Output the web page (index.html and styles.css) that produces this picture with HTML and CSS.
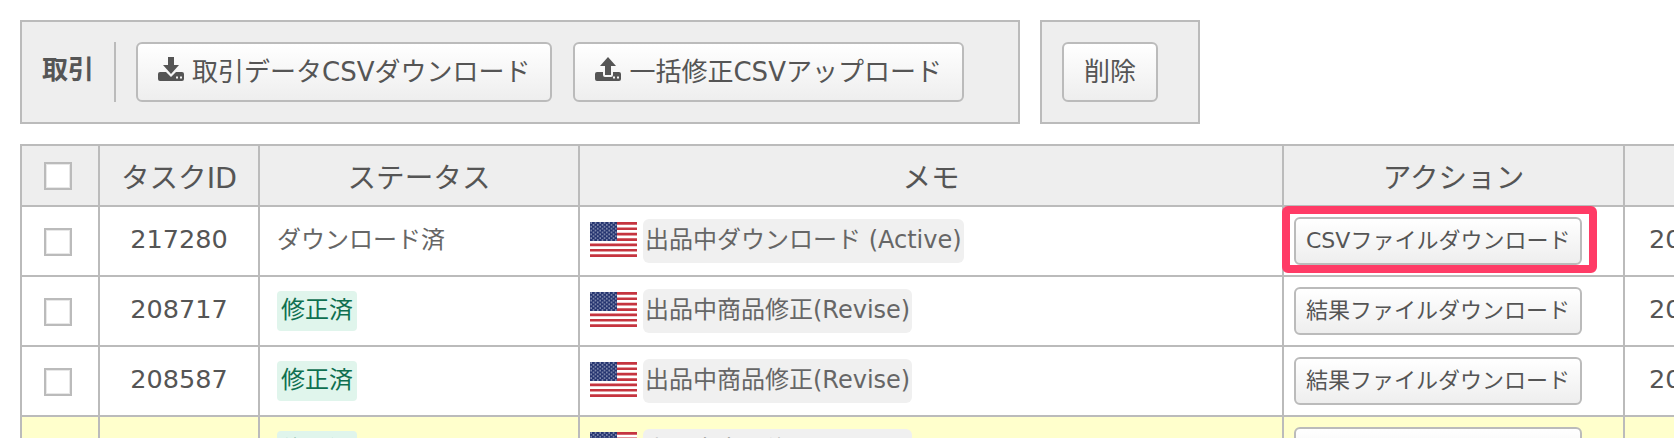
FILE: index.html
```html
<!DOCTYPE html>
<html lang="ja">
<head>
  <meta charset="UTF-8">
  <title>タスク一覧</title>
  <link rel="stylesheet" href="styles.css">
</head>
<body>

  <svg class="defs" width="0" height="0">
    <defs>
      <pattern id="stars" width="4.5" height="3.8" patternUnits="userSpaceOnUse">
        <circle cx="1.1" cy="0.9" r="0.7" fill="#dfe3f0"/>
        <circle cx="3.4" cy="2.8" r="0.7" fill="#dfe3f0"/>
      </pattern>
      <symbol id="flag-us" viewBox="0 0 47 35">
        <rect width="47" height="35" fill="#fff"/>
        <path d="M0 0h47v2.7H0zM0 5.4h47v2.7H0zM0 10.800h47v2.7H0zM0 16.200h47v2.7H0zM0 21.500h47v2.7H0zM0 26.900h47v2.7H0zM0 32.300h47V35H0z" fill="#c5343f"/>
        <rect width="27" height="19" fill="#24346f"/>
        <rect width="27" height="19" fill="url(#stars)"/>
      </symbol>
    </defs>
  </svg>

  <div class="toolbar">
    <div class="panel">
      <span class="panel-label">取引</span>
      <button class="btn">
        <svg class="icon" viewBox="0 0 26 24">
          <path fill-rule="evenodd" d="M10 0h6v8h5l-8 9-8-9h5zM2 15h6l5 5 5-5h6q2 0 2 2v5q0 2-2 2H2q-2 0-2-2v-5q0-2 2-2zM18 19.500v2h2v-2zM22 19.500v2h2v-2z"/>
        </svg>
        取引データCSVダウンロード
      </button>
      <button class="btn">
        <svg class="icon" viewBox="0 0 26 24">
          <path fill-rule="evenodd" d="M13 0l8 9h-5v9h-6V9H5zM2 15h6v3q0 2 2 2h6q2 0 2-2v-3h6q2 0 2 2v5q0 2-2 2H2q-2 0-2-2v-5q0-2 2-2zM18 19.500v2h2v-2zM22 19.500v2h2v-2z"/>
        </svg>
        一括修正CSVアップロード
      </button>
    </div>
    <div class="panel panel-small">
      <button class="btn">削除</button>
    </div>
  </div>

  <table class="task-table">
    <colgroup>
      <col class="col-check">
      <col class="col-id">
      <col class="col-status">
      <col class="col-memo">
      <col class="col-action">
      <col class="col-date">
    </colgroup>
    <thead>
      <tr>
        <th><input type="checkbox" class="check"></th>
        <th>タスクID</th>
        <th>ステータス</th>
        <th>メモ</th>
        <th>アクション</th>
        <th>作成日時</th>
      </tr>
    </thead>
    <tbody>
      <tr>
        <td><input type="checkbox" class="check"></td>
        <td class="num">217280</td>
        <td class="status status-plain">ダウンロード済</td>
        <td>
          <div class="memo">
            <svg class="flag"><use href="#flag-us"/></svg>
            <span class="chip">出品中ダウンロード (Active)</span>
          </div>
        </td>
        <td class="action">
          <button class="btn btn-small">CSVファイルダウンロード</button>
          <span class="highlight"></span>
        </td>
        <td class="date">2020/06/18</td>
      </tr>
      <tr>
        <td><input type="checkbox" class="check"></td>
        <td class="num">208717</td>
        <td class="status"><span class="badge">修正済</span></td>
        <td>
          <div class="memo">
            <svg class="flag"><use href="#flag-us"/></svg>
            <span class="chip">出品中商品修正(Revise)</span>
          </div>
        </td>
        <td class="action"><button class="btn btn-small">結果ファイルダウンロード</button></td>
        <td class="date">2020/06/02</td>
      </tr>
      <tr>
        <td><input type="checkbox" class="check"></td>
        <td class="num">208587</td>
        <td class="status"><span class="badge">修正済</span></td>
        <td>
          <div class="memo">
            <svg class="flag"><use href="#flag-us"/></svg>
            <span class="chip">出品中商品修正(Revise)</span>
          </div>
        </td>
        <td class="action"><button class="btn btn-small">結果ファイルダウンロード</button></td>
        <td class="date">2020/06/02</td>
      </tr>
      <tr class="row-new">
        <td><input type="checkbox" class="check"></td>
        <td class="num">208412</td>
        <td class="status"><span class="badge">修正済</span></td>
        <td>
          <div class="memo">
            <svg class="flag"><use href="#flag-us"/></svg>
            <span class="chip">出品中商品修正(Revise)</span>
          </div>
        </td>
        <td class="action"><button class="btn btn-small">結果ファイルダウンロード</button></td>
        <td class="date">2020/06/01</td>
      </tr>
    </tbody>
  </table>

</body>
</html>
```

FILE: styles.css
```css
* {
  box-sizing: border-box;
}

html, body {
  height: 438px;
  overflow: hidden;
}

body {
  margin: 0;
  padding: 20px;
  background: #fff;
  color: #555;
  font-family: "DejaVu Sans", "Noto Sans CJK JP", sans-serif;
  font-size: 24px;
}

.defs {
  position: absolute;
}

.toolbar {
  display: flex;
  gap: 20px;
  margin-bottom: 20px;
}

.panel {
  display: flex;
  align-items: center;
  gap: 21px;
  width: 1000px;
  height: 104px;
  padding: 0 20px;
  background: #eee;
  border: 2px solid #bbb;
}

.panel-small {
  width: 160px;
}

.panel-label {
  height: 60px;
  margin-right: -1px;
  padding-right: 20px;
  line-height: 57px;
  border-right: 2px solid #bbb;
  font-weight: bold;
  font-size: 26px;
}

.btn {
  display: inline-flex;
  align-items: center;
  gap: 8px;
  height: 60px;
  padding: 0 20px 6px;
  background: linear-gradient(#fff, #eee);
  border: 2px solid #bbb;
  border-radius: 6px;
  color: #555;
  font-family: inherit;
  font-size: 26px;
  white-space: nowrap;
}

.btn-small {
  height: 48px;
  padding: 0 10px 6px;
  font-size: 22px;
}

.icon {
  width: 26px;
  height: 24px;
  fill: #555;
}

.task-table {
  width: 2003px;
  table-layout: fixed;
  border-collapse: collapse;
}

.col-check { width: 78px; }
.col-id { width: 160px; }
.col-status { width: 320px; }
.col-memo { width: 704px; }
.col-action { width: 341px; }
.col-date { width: 400px; }

th, td {
  padding: 0;
  border: 2px solid #bbb;
  text-align: center;
}

th {
  height: 61px;
  background: #eee;
  font-weight: normal;
  font-size: 28.6px;
}

td {
  height: 70px;
  font-size: 25.5px;
}

.row-new td {
  background: #ffc;
}

.check {
  display: block;
  appearance: none;
  width: 28px;
  height: 28px;
  margin: 0 auto;
  position: relative;
  left: -2px;
  background: #fff;
  border: 2px solid #bbb;
  box-shadow: inset 0 0 0 1px #e8e8e8;
}

td .check {
  top: 1px;
}

td.num {
  padding-bottom: 4px;
}

td.status {
  padding-left: 17px;
  text-align: left;
  font-size: 24px;
}

td.status-plain {
  padding-bottom: 8px;
  color: #666;
}

.badge {
  display: inline-block;
  padding: 0 4px 2px;
  line-height: 38px;
  background: #e0f5ec;
  border-radius: 4px;
  color: #0f7050;
}

.memo {
  display: flex;
  align-items: center;
  gap: 6px;
  padding-left: 10px;
  text-align: left;
}

.flag {
  width: 47px;
  height: 35px;
  margin-top: -3px;
  flex-shrink: 0;
}

.chip {
  padding: 0 2px 1px;
  line-height: 43px;
  background: #f0f0f0;
  border-radius: 6px;
  color: #666;
  font-size: 24px;
  white-space: nowrap;
}

td.action {
  position: relative;
  padding-left: 10px;
  text-align: left;
}

/* red marker drawn over the first row's button */
.highlight {
  position: absolute;
  top: -1px;
  left: -2px;
  width: 315px;
  height: 67px;
  border: 8px solid #ff3b66;
  border-radius: 6px;
}

td.date {
  padding: 0 0 4px 24px;
  text-align: left;
}
```
